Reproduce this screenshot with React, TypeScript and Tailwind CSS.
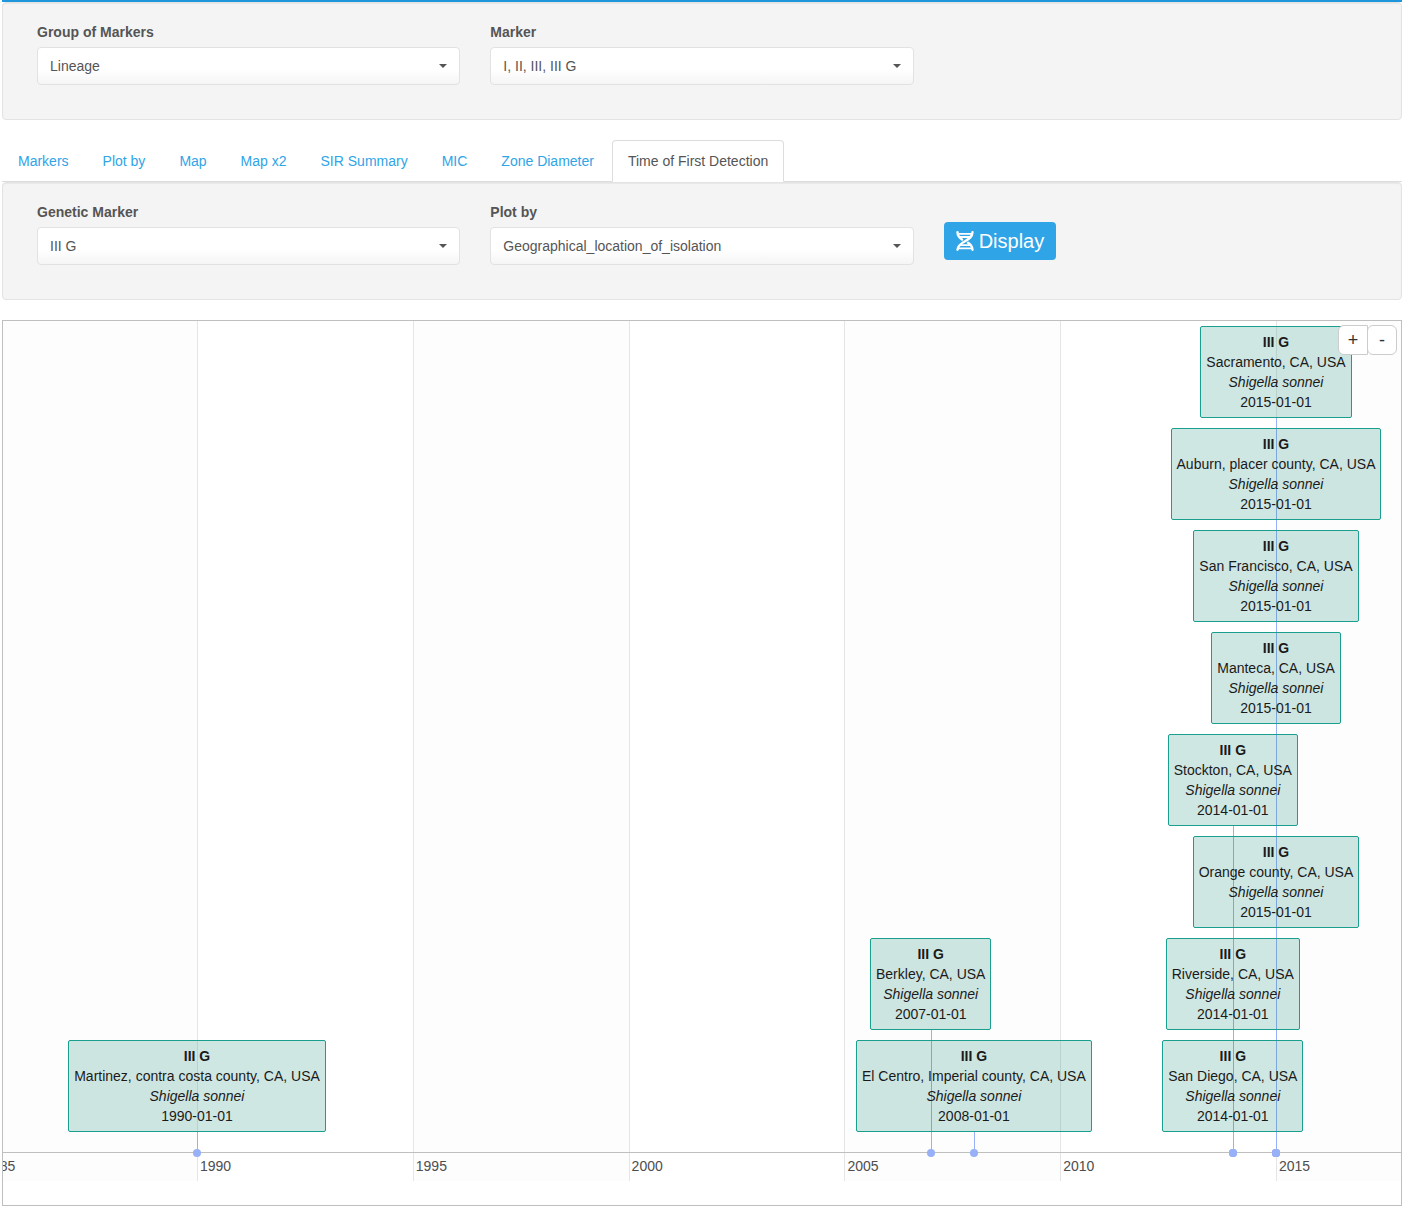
import { useState } from "react";

const ORIGIN_YEAR = 1990;
const toPercent = (year: number) =>
  `${((194 + (year - ORIGIN_YEAR) * 43.16) / 1398) * 100}%`;

type Detection = { place: string; year: number; row: number };

const detections: Detection[] = [
  { place: "Sacramento, CA, USA", year: 2015, row: 7 },
  { place: "Auburn, placer county, CA, USA", year: 2015, row: 6 },
  { place: "San Francisco, CA, USA", year: 2015, row: 5 },
  { place: "Manteca, CA, USA", year: 2015, row: 4 },
  { place: "Stockton, CA, USA", year: 2014, row: 3 },
  { place: "Orange county, CA, USA", year: 2015, row: 2 },
  { place: "Berkley, CA, USA", year: 2007, row: 1 },
  { place: "Riverside, CA, USA", year: 2014, row: 1 },
  { place: "Martinez, contra costa county, CA, USA", year: 1990, row: 0 },
  { place: "El Centro, Imperial county, CA, USA", year: 2008, row: 0 },
  { place: "San Diego, CA, USA", year: 2014, row: 0 },
];

const ticks = [1985, 1990, 1995, 2000, 2005, 2010, 2015];

const tabs = [
  "Markers",
  "Plot by",
  "Map",
  "Map x2",
  "SIR Summary",
  "MIC",
  "Zone Diameter",
  "Time of First Detection",
];

function SelectField({ id, label, options }: { id: string; label: string; options: string[] }) {
  return (
    <div className="mb-[15px] px-[15px]">
      <label htmlFor={id} className="mb-[5px] block font-bold">
        {label}
      </label>
      <div className="relative">
        <select
          id={id}
          className="block h-[38px] w-full appearance-none rounded border border-[#e2e2e2] bg-linear-to-b from-white from-60% to-[#f5f5f5] pr-8 pl-3 text-[#555]"
        >
          {options.map((o) => (
            <option key={o}>{o}</option>
          ))}
        </select>
        <svg
          viewBox="0 0 8 4"
          className="pointer-events-none absolute top-[17px] right-[13px] h-1 w-2 fill-[#555]"
          aria-hidden="true"
        >
          <path d="M0 0h8L4 4z" />
        </svg>
      </div>
    </div>
  );
}

function Panel({ children }: { children: React.ReactNode }) {
  return (
    <section className="grid grid-cols-3 rounded border border-[#e3e3e3] bg-[#f4f4f4] p-[19px] shadow-[inset_0_1px_1px_rgba(0,0,0,0.05)]">
      {children}
    </section>
  );
}

function DnaIcon() {
  return (
    <svg
      viewBox="0 0 18 20"
      className="h-5 w-[18px] fill-none stroke-white"
      strokeLinecap="round"
      aria-hidden="true"
    >
      <path
        strokeWidth="2.4"
        d="M16.500 1.200C16.300 6 13 8 9 10.200S1.700 14.500 1.500 18.800M1.500 1.200C1.600 4.800 3.500 6.800 6 8.500M12 11.800C14.500 13.300 16.300 15.300 16.500 18.800"
      />
      <path strokeWidth="1.800" strokeLinecap="butt" d="M2 2.900h14M4 6h10M4 14.200h10M2 17.300h14" />
    </svg>
  );
}

function Timeline() {
  return (
    <section
      aria-label="Time of first detection"
      className="relative mt-5 overflow-hidden border border-[#bfbfbf] pb-6"
    >
      <div className="relative h-[860px]">
        {ticks.map((year) => (
          <div
            key={year}
            className={
              year % 10 === 5
                ? "absolute inset-y-0 w-[15.436%] border-l border-[#e5e5e5] bg-[#fdfdfd]"
                : "absolute inset-y-0 w-[15.436%] border-l border-[#e5e5e5]"
            }
            style={{ left: toPercent(year) }}
          >
            <span className="absolute bottom-[5px] left-0.5 text-[#4d4d4d]">{year}</span>
          </div>
        ))}
        <div className="absolute inset-x-0 bottom-7 h-px bg-[#bfbfbf]" />
        {detections.map((d) => (
          <div
            key={d.place}
            className="absolute bottom-7 w-px bg-[#97b0f8]"
            style={{ left: toPercent(d.year), height: 21 + d.row * 102 }}
          />
        ))}
        {detections.map((d) => (
          <div
            key={d.place}
            className="absolute bottom-6 -ml-1 size-2 rounded-full bg-[#97b0f8]"
            style={{ left: toPercent(d.year) }}
          />
        ))}
        {detections.map((d) => (
          <div
            key={d.place}
            className="absolute flex w-0 justify-center"
            style={{ left: toPercent(d.year), bottom: 49 + d.row * 102 }}
          >
            <div className="rounded-xs border border-[#1a9f8f] bg-[rgba(15,135,115,0.2)] p-[5px] text-center whitespace-nowrap text-[#1a1a1a]">
              <strong className="block">III G</strong>
              <div>{d.place}</div>
              <em className="block">Shigella sonnei</em>
              <time className="block">{d.year}-01-01</time>
            </div>
          </div>
        ))}
      </div>
      <div className="absolute top-1 right-1 flex text-[#333]">
        <button
          type="button"
          aria-label="Zoom in"
          className="h-[30px] w-[30px] rounded-l-md border border-[#ccc] bg-white text-lg leading-none"
        >
          +
        </button>
        <button
          type="button"
          aria-label="Zoom out"
          className="-ml-px h-[30px] w-[30px] rounded-md border border-[#ccc] bg-white text-lg leading-none"
        >
          -
        </button>
      </div>
    </section>
  );
}

export default function App() {
  const [active, setActive] = useState("Time of First Detection");
  return (
    <main className="bg-white pb-0.5 pl-0.5 font-['Liberation_Sans',Arial,sans-serif] text-sm leading-5 text-[#555]">
      <div className="h-0.5 bg-[#1d96db]" />
      <Panel>
        <SelectField id="group" label="Group of Markers" options={["Lineage"]} />
        <SelectField id="marker" label="Marker" options={["I, II, III, III G"]} />
      </Panel>
      <nav className="mt-5 flex gap-0.5 border-b border-[#ddd]">
        {tabs.map((tab) => (
          <a
            key={tab}
            href="#"
            onClick={(e) => {
              e.preventDefault();
              setActive(tab);
            }}
            className={
              tab === active
                ? "-mb-px rounded-t border border-[#ddd] border-b-white bg-white px-[15px] py-2.5"
                : "-mb-px border border-transparent px-[15px] py-2.5 text-[#2fa4e7]"
            }
          >
            {tab}
          </a>
        ))}
      </nav>
      <Panel>
        <SelectField id="genetic-marker" label="Genetic Marker" options={["III G"]} />
        <SelectField id="plot-by" label="Plot by" options={["Geographical_location_of_isolation"]} />
        <div className="px-[15px] pt-5">
          <button
            type="button"
            className="flex h-[38px] items-center gap-[5px] rounded bg-[#2fa4e7] px-3 text-xl text-white"
          >
            <DnaIcon />
            Display
          </button>
        </div>
      </Panel>
      <Timeline />
    </main>
  );
}
